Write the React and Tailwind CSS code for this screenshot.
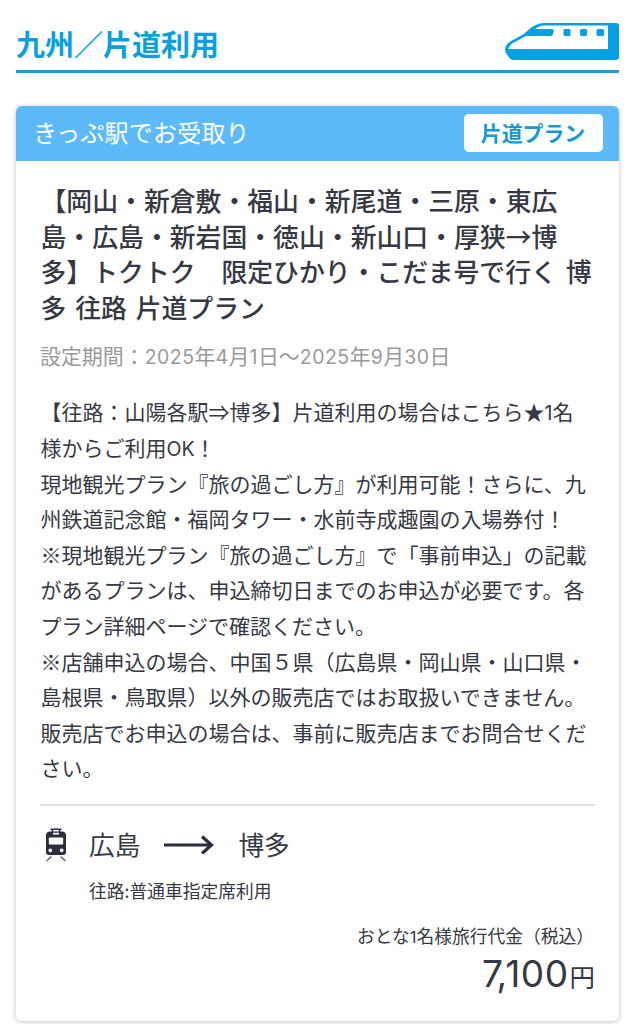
import React from "react";

const titleLines = [
  "【岡山・新倉敷・福山・新尾道・三原・東広",
  "島・広島・新岩国・徳山・新山口・厚狭→博",
  "多】トクトク　限定ひかり・こだま号で行く 博",
  "多 往路 片道プラン",
];

const bodyLines = [
  "【往路：山陽各駅⇒博多】片道利用の場合はこちら★1名",
  "様からご利用OK！",
  "現地観光プラン『旅の過ごし方』が利用可能！さらに、九",
  "州鉄道記念館・福岡タワー・水前寺成趣園の入場券付！",
  "※現地観光プラン『旅の過ごし方』で「事前申込」の記載",
  "があるプランは、申込締切日までのお申込が必要です。各",
  "プラン詳細ページで確認ください。",
  "※店舗申込の場合、中国５県（広島県・岡山県・山口県・",
  "島根県・鳥取県）以外の販売店ではお取扱いできません。",
  "販売店でお申込の場合は、事前に販売店までお問合せくだ",
  "さい。",
];

// Latin letters and digits use a separate face from the Japanese text.
function Mixed({ text }) {
  return text.split(/([0-9A-Z]+)/).map((part, i) =>
    i % 2 ? (
      <span key={i} className="font-['Inter',sans-serif] text-[0.93em] leading-none">
        {part}
      </span>
    ) : (
      part
    )
  );
}

function Shinkansen() {
  return (
    <svg className="h-[37px] w-[114px]" viewBox="0 0 114 37">
      <path
        fill="#069fe3"
        fillRule="evenodd"
        d="M39 0H111Q114 0 114 3V34Q114 37 111 37H8Q6 37 4.500 35L1 30Q-1 26 1.500 22Q3 19.500 7 17.500L18 11.500L24 6.500Q31 0 39 0ZM40 2.500Q34 2.500 30 6H47Q49 6 48.700 8L48 11Q47.700 13 45.500 13H21L9 19.500Q4 22 3.500 26H103V2.500ZM60 6H64Q65.500 6 65.500 7.500V11.500Q65.500 13 64 13H60Q58.500 13 58.500 11.500V7.500Q58.500 6 60 6ZM76.500 6H80.500Q82 6 82 7.500V11.500Q82 13 80.500 13H76.500Q75 13 75 11.500V7.500Q75 6 76.500 6ZM93 6H97.500Q99 6 99 7.500V11.500Q99 13 97.500 13H93Q91.500 13 91.500 11.500V7.500Q91.500 6 93 6Z"
      />
    </svg>
  );
}

function TrainIcon() {
  return (
    <svg className="h-[34px] w-[22px]" viewBox="0 0 22 34">
      <path d="M5.500 1.200H16.500M7.500 1V5M14.500 1V5" stroke="#2b2f3d" strokeWidth="1.500" fill="none" />
      <path
        fill="#2b2f3d"
        fillRule="evenodd"
        d="M4.500 3.500H17.500Q21 4 21 7V24Q21 27 18 27H4Q1 27 1 24V7Q1 4 4.500 3.500ZM8 4.700V6.500H14V4.700ZM4.800 9.500Q3.800 9.500 3.800 10.500V15.500Q3.800 16.500 4.800 16.500H17.200Q18.200 16.500 18.200 15.500V10.500Q18.200 9.500 17.200 9.500ZM5.300 20.400A1.900 1.900 0 1 0 5.300 24.200A1.900 1.900 0 1 0 5.300 20.400ZM16.700 20.400A1.900 1.900 0 1 0 16.700 24.200A1.900 1.900 0 1 0 16.700 20.400Z"
      />
      <path d="M6.500 28.500L1.500 33M15.500 28.500L20.500 33" stroke="#555863" strokeWidth="1.300" />
    </svg>
  );
}

export default function App() {
  return (
    <main className="h-[1024px] w-[635px] overflow-hidden bg-white px-4 font-['Noto_Sans_CJK_JP',sans-serif] whitespace-nowrap text-[#363943]">
      <header className="flex h-[73px] items-start justify-between border-b-[3px] border-[#159ed8] pt-[23px]">
        <h1 className="text-[29px] leading-[41px] font-bold text-[#0c9fdf]">九州／片道利用</h1>
        <Shinkansen />
      </header>

      <article className="mt-[33px] h-[915px] overflow-hidden rounded-md bg-white shadow-[0_1px_5px_rgba(0,0,0,0.25)]">
        <div className="flex h-[55px] items-start justify-between bg-[#5dbafa] pt-2 pr-4 pl-[17px]">
          <span className="text-[23.900px] leading-[35px] tracking-[0.3px] text-white">きっぷ駅でお受取り</span>
          <span className="flex h-[38px] w-[139px] items-center justify-center rounded-[5px] bg-white pr-px pb-px text-[20.900px] font-bold text-[#1398d8]">
            片道プラン
          </span>
        </div>

        <div className="px-6 pt-[21px]">
          <h2 className="pl-[0.500px] text-[25.850px] leading-[35.600px] font-medium [word-spacing:3px]">
            {titleLines.map((line) => (
              <span key={line} className="block">{line}</span>
            ))}
          </h2>
          <p className="mt-[14px] text-[20.950px] leading-[35px] text-[#999999] [&>span]:tracking-[0.5px]">
            <Mixed text="設定期間：2025年4月1日～2025年9月30日" />
          </p>
          <div className="mt-[21px] pl-[0.500px] text-[21px] leading-[35.600px]">
            {bodyLines.map((line) => (
              <p key={line}><Mixed text={line} /></p>
            ))}
          </div>

          <div className="mt-[18px] flex border-t-2 border-[#e0e0e0] pt-[18px]">
            <div className="w-12 pt-1 pl-[5px]"><TrainIcon /></div>
            <div>
              <div className="flex h-10 items-center text-[25.700px] leading-10">
                <span className="pl-px">広島</span>
                <svg className="mr-6 ml-6 h-5 w-[50px]" viewBox="0 0 50 20">
                  <path d="M0 11H48M38 2.500L47.500 11L38 19.500" fill="none" stroke="#2b2f3d" strokeWidth="3.200" />
                </svg>
                <span>博多</span>
              </div>
              <p className="mt-[13px] pl-px text-[17.750px] leading-[27px]">往路:普通車指定席利用</p>
            </div>
          </div>

          <div className="mt-[17px] text-right">
            <p className="pr-px text-[17.750px] leading-7"><Mixed text="おとな1名様旅行代金（税込）" /></p>
            <p className="mt-px flex h-12 items-baseline justify-end leading-[48px]">
              <span className="mr-px font-['Inter',sans-serif] text-[37px]">
                <span className="tracking-[-1.800px]">7,</span>
                <span className="tracking-[0.500px]">100</span>
              </span>
              <span className="text-[25.500px]">円</span>
            </p>
          </div>
        </div>
      </article>
    </main>
  );
}
